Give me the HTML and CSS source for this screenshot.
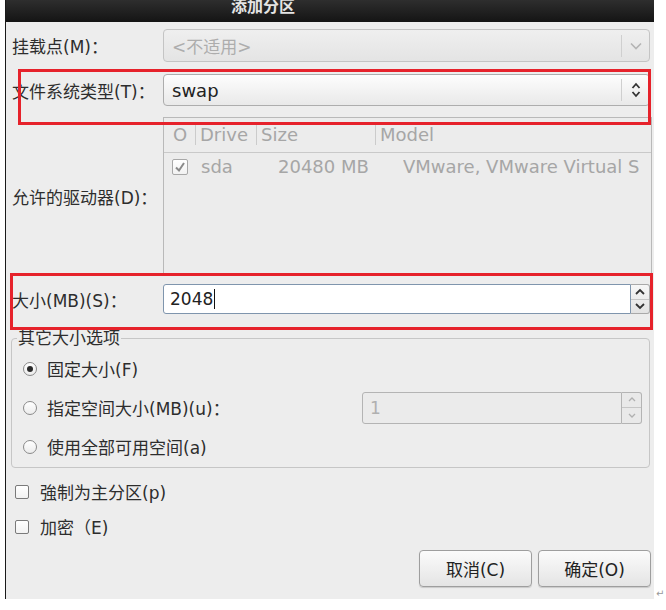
FILE: index.html
```html
<!DOCTYPE html>
<html>
<head>
    <title>添加分区</title>
    <link rel="stylesheet" href="styles.css">
</head>
<body>
    <div class="dialog">
        <!-- Title bar -->
        <div class="titlebar"><span class="title">添加分区</span></div>

        <div class="content">
            <div class="row row-mount">
                <label class="lbl">挂载点(M)：</label>
                <div class="combo disabled">
                    <span class="combo-text">&lt;不适用&gt;</span>
                    <span class="combo-btn">
                        <svg width="14" height="10" viewBox="0 0 14 10"><path d="M2 2.5 L7 7.5 L12 2.5" fill="none" stroke="#b4b4b4" stroke-width="1.6"/></svg>
                    </span>
                </div>
            </div>

            <div class="row row-fs">
                <label class="lbl">文件系统类型(T)：</label>
                <div class="combo">
                    <span class="combo-text big">swap</span>
                    <span class="combo-btn">
                        <svg width="12" height="18" viewBox="0 0 12 18"><path d="M2.5 7 L6 3 L9.5 7 M2.5 11 L6 15 L9.5 11" fill="none" stroke="#333" stroke-width="1.8"/></svg>
                    </span>
                </div>
            </div>

            <div class="row row-drives">
                <label class="lbl">允许的驱动器(D)：</label>
                <div class="drives">
                    <div class="drives-head">
                        <span class="h0">O</span>
                        <span class="h1">Drive</span>
                        <span class="h2">Size</span>
                        <span class="h3">Model</span>
                    </div>
                    <div class="drives-row">
                        <span class="d0"><span class="check list-check">
                            <svg width="14" height="14" viewBox="0 0 14 14"><path d="M3 7.5 L6 10.5 L11 3" fill="none" stroke="#8a8a8a" stroke-width="2"/></svg>
                        </span></span>
                        <span>sda</span>
                        <span>20480 MB</span>
                        <span class="model">VMware, VMware Virtual S</span>
                    </div>
                </div>
            </div>

            <div class="row row-size">
                <label class="lbl">大小(MB)(S)：</label>
                <div class="spin">
                    <span class="spin-text">2048<i class="caret"></i></span>
                    <span class="spin-btns">
                        <span class="sb"><svg width="12" height="8" viewBox="0 0 12 8"><path d="M2 6 L6 2 L10 6" fill="none" stroke="#333" stroke-width="1.8"/></svg></span>
                        <span class="sb"><svg width="12" height="8" viewBox="0 0 12 8"><path d="M2 2 L6 6 L10 2" fill="none" stroke="#333" stroke-width="1.8"/></svg></span>
                    </span>
                </div>
            </div>

            <fieldset class="frame">
                <legend>其它大小选项</legend>
                <div class="opt"><span class="radio on"></span>固定大小(F)</div>
                <div class="opt">
                    <span class="radio"></span>指定空间大小(MB)(u)：
                    <div class="spin small disabled">
                        <span class="spin-text">1</span>
                        <span class="spin-btns">
                            <span class="sb"><svg width="10" height="7" viewBox="0 0 10 7"><path d="M2 5 L5 2 L8 5" fill="none" stroke="#b0b0b0" stroke-width="1.3"/></svg></span>
                            <span class="sb"><svg width="10" height="7" viewBox="0 0 10 7"><path d="M2 2 L5 5 L8 2" fill="none" stroke="#b0b0b0" stroke-width="1.3"/></svg></span>
                        </span>
                    </div>
                </div>
                <div class="opt"><span class="radio"></span>使用全部可用空间(a)</div>
            </fieldset>

            <div class="chk"><span class="check"></span>強制为主分区(p)</div>
            <div class="chk"><span class="check"></span>加密（E)</div>

            <div class="buttons">
                <button class="btn">取消(C)</button>
                <button class="btn">确定(O)</button>
            </div>
        </div>

        <!-- annotation boxes drawn over the dialog -->
        <div class="mark mark-fs"></div>
        <div class="mark mark-size"></div>
        <span class="para">↵</span>
    </div>
</body>
</html>
```

FILE: styles.css
```css
html, body {
    margin: 0;
    padding: 0;
    background: #fff;
}
body {
    font-family: "DejaVu Sans", "Noto Sans CJK SC", sans-serif;
    font-size: 17px;
    color: #2d2d2d;
}
.dialog {
    position: relative;
    margin-left: 5px;
    width: 649px;
    border-left: 1px solid #1a1a1a;
    box-sizing: border-box;
}
.titlebar {
    height: 22px;
    overflow: hidden;
    background: linear-gradient(#2e2e2e, #141414);
    padding-left: 225px;
}
.title {
    display: block;
    margin-top: -4px;
    line-height: 18px;
    font-size: 16px;
    color: #e4e4e4;
    font-weight: bold;
    font-family: "Noto Sans CJK SC", sans-serif;
}
.content {
    background: #ededed;
    padding: 7px 2px 12px 6px;
}
.row {
    display: flex;
    align-items: center;
    margin-right: 2px;
}
.lbl {
    width: 151px;
    flex: none;
    white-space: nowrap;
}
.row-fs { margin-top: 12px; }
.row-drives { margin-top: 11px; margin-right: 0; }
.row-size { margin-top: 9px; }

/* combo boxes */
.combo {
    flex: 1;
    display: flex;
    align-items: center;
    height: 33px;
    box-sizing: border-box;
    border: 1px solid #adadad;
    border-radius: 4px;
    background: linear-gradient(#fdfdfd, #e9e9e9);
}
.row-fs .combo { height: 32px; }
.combo.disabled {
    border-color: #c4c4c4;
    background: linear-gradient(#efefef, #e4e4e4);
}
.combo-text {
    flex: 1;
    padding-left: 8px;
    color: #222;
}
.combo.disabled .combo-text { color: #adadad; }
.combo-text.big { font-size: 18px; }
.combo-btn {
    width: 27px;
    height: 22px;
    border-left: 1px solid #cfcfcf;
    display: flex;
    align-items: center;
    justify-content: center;
}

/* drive list */
.drives {
    flex: 1;
    height: 158px;
    box-sizing: border-box;
    border: 1px solid #b9b9b9;
    background: #ececec;
    color: #a6a6a6;
    font-size: 18px;
    overflow: hidden;
}
.drives-head {
    display: flex;
    align-items: center;
    height: 34px;
    border-bottom: 1px solid #c9c9c9;
}
.drives-head span {
    box-sizing: border-box;
    line-height: 20px;
    padding-left: 4px;
    border-left: 1px solid #cbcbcb;
}
.drives-head .h0 { width: 31px; padding-left: 9px; border-left: none; }
.drives-head .h1 { width: 61px; }
.drives-head .h2 { width: 119px; }
.drives-row {
    display: grid;
    grid-template-columns: 37px 77px 125px 1fr;
    align-items: center;
    height: 27px;
    white-space: nowrap;
}
.d0 { padding-left: 8px; display: flex; }
.model { overflow: hidden; }

.check {
    display: inline-block;
    width: 14px;
    height: 14px;
    box-sizing: border-box;
    border: 1px solid #7a7a7a;
    border-radius: 2px;
    background: linear-gradient(#fff, #f2f2f2);
}
.list-check {
    width: 16px;
    height: 16px;
    border-color: #a8a8a8;
    display: flex;
    align-items: center;
    justify-content: center;
}

/* spin buttons */
.spin {
    flex: 1;
    display: flex;
    height: 30px;
}
.spin-text {
    flex: 1;
    display: flex;
    align-items: center;
    padding-left: 6px;
    font-size: 17px;
    color: #222;
    background: #fff;
    border: 1px solid #7f95ad;
    border-radius: 3px 0 0 3px;
}
.caret {
    display: inline-block;
    width: 1px;
    height: 20px;
    background: #111;
    margin-left: 1px;
}
.spin-btns {
    width: 18px;
    display: flex;
    flex-direction: column;
    border: 1px solid #a9a9a9;
    border-left: none;
    border-radius: 0 3px 3px 0;
    background: linear-gradient(#f7f7f7, #e3e3e3);
}
.sb {
    flex: 1;
    display: flex;
    align-items: center;
    justify-content: center;
}
.sb + .sb { border-top: 1px solid #c6c6c6; }
.spin.small {
    flex: none;
    width: 280px;
    height: 32px;
    margin-left: auto;
}
.spin.disabled .spin-text {
    background: #ebebeb;
    border-color: #b4b4b4;
    color: #b0b0b0;
    padding-left: 7px;
}
.spin.disabled .spin-btns {
    width: 19px;
    border-color: #b4b4b4;
    background: #e9e9e9;
}

/* other size options frame */
.frame {
    margin: 15px 2px 0 -1px;
    padding: 2px 7px 1px 11px;
    border: 1px solid #c6c6c6;
    border-radius: 4px;
}
.frame legend {
    padding: 0 1px;
    margin-left: -6px;
    line-height: 18px;
}
.opt {
    display: flex;
    align-items: center;
    height: 39px;
    white-space: nowrap;
}
.radio {
    width: 14px;
    height: 14px;
    box-sizing: border-box;
    border: 1px solid #8a8a8a;
    border-radius: 50%;
    background: linear-gradient(#fff, #ececec);
    margin-right: 10px;
    display: flex;
    align-items: center;
    justify-content: center;
}
.radio.on::after {
    content: "";
    width: 6px;
    height: 6px;
    border-radius: 50%;
    background: #2a2a2a;
}

.chk {
    display: flex;
    align-items: center;
    height: 35px;
}
.frame + .chk { margin-top: 6px; }
.chk .check { margin: 0 11px 0 3px; }

.buttons {
    display: flex;
    justify-content: flex-end;
    gap: 6px;
    margin-top: 6px;
    margin-right: 1px;
}
.btn {
    width: 113px;
    height: 37px;
    font-family: "DejaVu Sans", "Noto Sans CJK SC", sans-serif;
    font-size: 17px;
    color: #222;
    border: 1px solid #9e9e9e;
    border-radius: 4px;
    background: linear-gradient(#fbfbfb, #e4e4e4);
    box-shadow: 0 1px 1px rgba(0,0,0,0.15);
}

.mark {
    position: absolute;
    box-sizing: border-box;
    border: 3px solid #e6222b;
}
.mark-fs { left: 12px; top: 69px; width: 633px; height: 56px; }
.mark-size { left: 4px; top: 273px; width: 643px; height: 57px; }
.para {
    position: absolute;
    left: 650px;
    top: 588px;
    font-size: 10px;
    color: #999;
}
```
